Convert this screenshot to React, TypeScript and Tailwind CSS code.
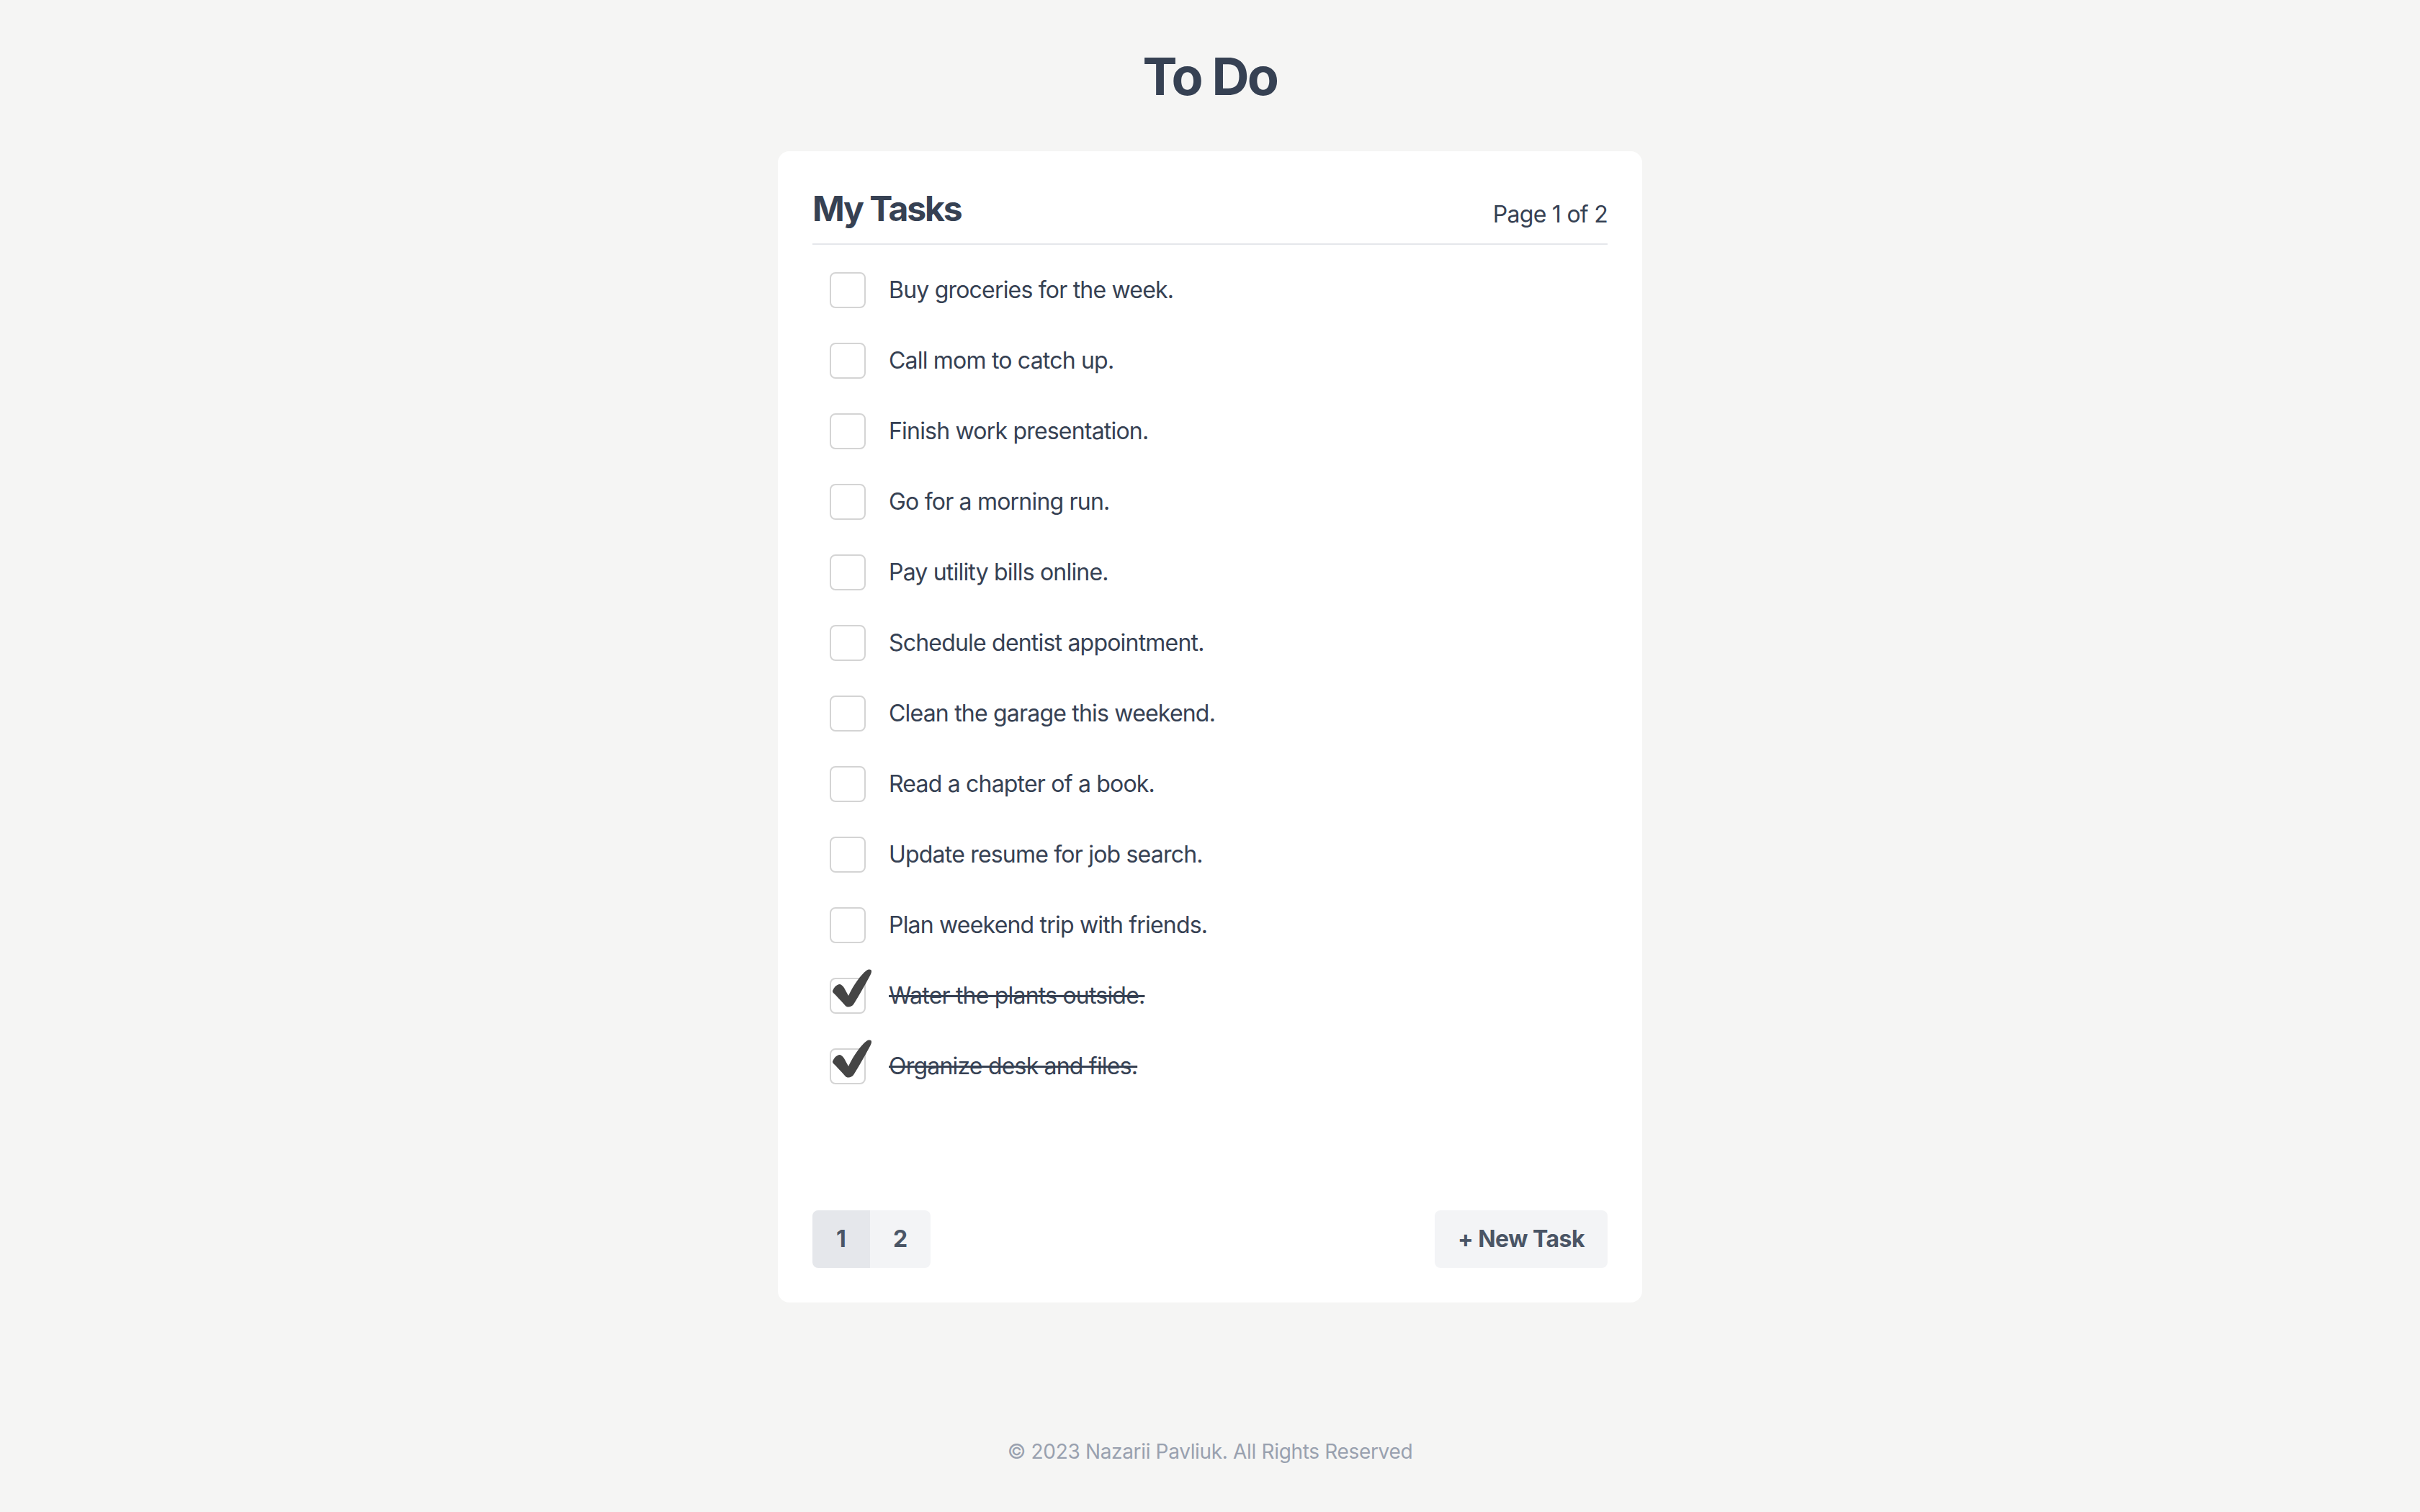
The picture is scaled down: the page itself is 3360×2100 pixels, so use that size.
const tasks = [
  { text: "Buy groceries for the week.", done: false },
  { text: "Call mom to catch up.", done: false },
  { text: "Finish work presentation.", done: false },
  { text: "Go for a morning run.", done: false },
  { text: "Pay utility bills online.", done: false },
  { text: "Schedule dentist appointment.", done: false },
  { text: "Clean the garage this weekend.", done: false },
  { text: "Read a chapter of a book.", done: false },
  { text: "Update resume for job search.", done: false },
  { text: "Plan weekend trip with friends.", done: false },
  { text: "Water the plants outside.", done: true },
  { text: "Organize desk and files.", done: true },
];

function Check() {
  return (
    <svg
      className="absolute left-[1px] top-[-14px]"
      width="56"
      height="54"
      viewBox="0 0 56 54"
    >
      <path
        d="M1 30 C3 25 6 22 10 21 C13 21 15 23 17 26 L23 37 C30 22 40 8 48 2 C51 0 55 0 55 3 C55 5 54 7 53 9 C46 22 37 38 30 49 C27 53 21 54 18 50 C12 43 6 37 2 33 C1 32 1 31 1 30 Z"
        fill="#454545"
      />
    </svg>
  );
}

function TaskRow({ text, done }: { text: string; done: boolean }) {
  return (
    <div className="flex items-center h-[98px] pl-[24px]">
      <div className="relative w-[50px] h-[50px] shrink-0 rounded-[8px] border-2 border-[#d4d4d4] bg-white">
        {done && <Check />}
      </div>
      <span
        className={
          "ml-[32px] text-[32px] leading-[48px] tracking-[-0.025em] text-gray-700 " +
          (done ? "line-through decoration-[3px] decoration-gray-700" : "")
        }
      >
        {text}
      </span>
    </div>
  );
}

export default function App() {
  return (
    <div className="min-h-screen flex flex-col bg-[#f5f5f4] font-['Inter',sans-serif]">
      <h1 className="pt-[66px] text-center text-[72px] leading-[80px] font-bold tracking-[-0.036em] text-gray-700">
        To Do
      </h1>

      <div className="mx-auto mt-[64px] w-[1200px] rounded-[16px] bg-white p-[48px]">
        <div className="flex items-end justify-between border-b-2 border-gray-200 pb-[16px]">
          <h2 className="text-[48px] leading-[64px] font-bold tracking-[-0.044em] text-gray-700">
            My Tasks
          </h2>
          <span className="text-[32px] leading-[48px] tracking-[-0.023em] text-gray-700">Page 1 of 2</span>
        </div>

        <div className="pt-[14px]">
          {tasks.map((t) => (
            <TaskRow key={t.text} text={t.text} done={t.done} />
          ))}
        </div>

        <div className="mt-[151px] flex items-center justify-between">
          <div className="flex overflow-hidden rounded-[8px]">
            <button className="w-[80px] h-[80px] bg-gray-200 text-[32px] font-bold text-gray-600">1</button>
            <button className="w-[84px] h-[80px] bg-gray-100 text-[32px] font-bold text-gray-600">2</button>
          </div>
          <button className="h-[80px] rounded-[8px] bg-gray-100 px-[32px] text-[32px] font-bold tracking-[-0.016em] text-gray-600">
            + New Task
          </button>
        </div>
      </div>

      <footer className="mt-auto pb-[64px] text-center text-[28px] leading-[40px] tracking-[-0.012em] text-gray-400">
        © 2023 Nazarii Pavliuk. All Rights Reserved
      </footer>
    </div>
  );
}
